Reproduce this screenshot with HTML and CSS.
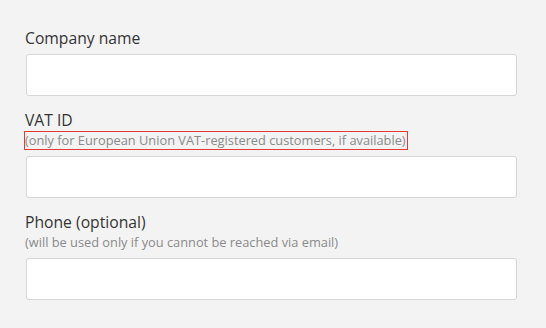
FILE: index.html
```html
<!DOCTYPE html>
<html lang="en">
<head>
    <meta charset="UTF-8">
    <title>Billing details</title>
    <link rel="stylesheet" href="styles.css">
</head>
<body>
    <div class="formulario">
        <div class="campo">
            <label for="company">Company name</label>
            <input type="text" id="company">
        </div>

        <div class="campo">
            <label for="vat">VAT ID</label>
            <span class="nota marcada">(only for European Union VAT-registered customers, if available)</span>
            <input type="text" id="vat">
        </div>

        <div class="campo">
            <label for="phone">Phone (optional)</label>
            <span class="nota">(will be used only if you cannot be reached via email)</span>
            <input type="text" id="phone">
        </div>
    </div>
</body>
</html>
```

FILE: styles.css
```css
body {
    margin: 0;
    font-family: "Open Sans", Lato, sans-serif;
    background-color: #f3f3f3;
}
.formulario {
    padding: 28px 30px 0 24px;
}
.campo {
    margin-bottom: 14px;
}
label {
    display: block;
    font-size: 15.7px;
    line-height: 20px;
    color: #333;
    padding-left: 1px;
}
.nota {
    display: block;
    width: fit-content;
    font-size: 12.8px;
    line-height: 17px;
    color: #8a8a8a;
    margin-top: 1px;
    padding: 0 1px 0 0;
    border: 1px solid transparent;
}
.nota.marcada {
    border-color: #e53935;
}
input {
    display: block;
    width: calc(100% - 1px);
    height: 42px;
    box-sizing: border-box;
    margin: 6px 0 0 2px;
    background: #fff;
    border: 1px solid #d6d6d6;
    border-radius: 3px;
}
```
